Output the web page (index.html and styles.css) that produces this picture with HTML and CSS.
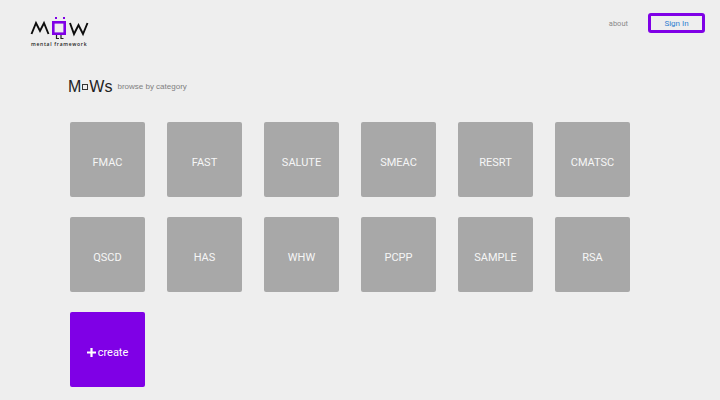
FILE: index.html
```html
<!DOCTYPE html>
<html lang="en">
<head>
<meta charset="utf-8">
<title>MOW mental framework</title>
<link rel="stylesheet" href="styles.css">
</head>
<body>
<header class="topbar">
  <a class="logo" href="#">
    <svg class="logo-mark" width="60" height="24" viewBox="0 0 60 24" aria-hidden="true">
      <path class="ink" d="M1.5 18 L6 7 L10 15 L14 7 L18.5 18"/>
      <path class="ink" d="M40 7 L44 18 L48.5 9 L53 18 L57.5 7"/>
      <rect class="frame" x="23.3" y="6.3" width="11.4" height="11.4"/>
      <rect class="dot" x="25" y="1" width="2" height="2"/>
      <rect class="dot" x="33" y="1" width="2" height="2"/>
      <path class="feet" d="M26.5 19 V22.5 H29 M31 19 V22.5 H33.5"/>
    </svg>
    <span class="tagline">mental framework</span>
  </a>
  <nav class="nav">
    <a class="about" href="#">about</a>
    <a class="signin" href="#">Sign In</a>
  </nav>
</header>
<main class="content">
  <div class="heading">
    <h1 class="title">M<span class="square"></span>Ws</h1>
    <span class="subtitle">browse by category</span>
  </div>
  <div class="grid">
    <a class="tile" href="#">FMAC</a>
    <a class="tile" href="#">FAST</a>
    <a class="tile" href="#">SALUTE</a>
    <a class="tile" href="#">SMEAC</a>
    <a class="tile" href="#">RESRT</a>
    <a class="tile" href="#">CMATSC</a>
    <a class="tile" href="#">QSCD</a>
    <a class="tile" href="#">HAS</a>
    <a class="tile" href="#">WHW</a>
    <a class="tile" href="#">PCPP</a>
    <a class="tile" href="#">SAMPLE</a>
    <a class="tile" href="#">RSA</a>
    <a class="tile create" href="#"><svg class="plus" width="9" height="9" viewBox="0 0 9 9" aria-hidden="true"><path d="M3.4 0h2.2v3.4H9v2.2H5.6V9H3.4V5.6H0V3.4h3.4z"/></svg>create</a>
  </div>
</main>
</body>
</html>
```
FILE: styles.css
```css
* { box-sizing: border-box; }
html, body { margin: 0; height: 400px; overflow: hidden; }
body { background: #eeeeee; font-family: Roboto, "Liberation Sans", sans-serif; }
a { text-decoration: none; }

.topbar { display: flex; justify-content: space-between; align-items: flex-start; height: 70px; padding: 13px 15px 0 30px; }
.logo { display: flex; flex-direction: column; width: 62px; color: #222; }
.logo-mark { display: block; margin-top: 3px; }
.ink { fill: none; stroke: #0c0c0c; stroke-width: 1.9; }
.frame { fill: none; stroke: #7f00e6; stroke-width: 2.6; }
.dot { fill: #7f00e6; }
.feet { fill: none; stroke: #222; stroke-width: 1.2; }
.tagline { font: 600 5px/6px "Open Sans", sans-serif; letter-spacing: 0.7px; white-space: nowrap; margin: 1px 0 0 1px; }

.nav { display: flex; align-items: center; gap: 20px; }
.about { font-size: 7.5px; color: #8a8a8a; }
.signin { display: flex; align-items: center; justify-content: center; width: 57px; height: 20px; border: 3px solid #7f00e6; border-radius: 3px; font-size: 8px; color: #2f7fd0; }

.content { padding: 0 0 0 68px; }
.heading { display: flex; align-items: center; gap: 5px; height: 52px; padding-bottom: 18px; }
.title { margin: 0; font: 400 16px/24px "Liberation Sans", sans-serif; color: #222; display: flex; align-items: center; }
.square { display: inline-block; width: 6px; height: 6px; margin: 0 1px; border: 1px solid #333; }
.subtitle { font: 400 8px/12px "Liberation Sans", sans-serif; color: #808080; }

.grid { display: grid; grid-template-columns: repeat(6, 75px); grid-auto-rows: 75px; gap: 20px 22px; padding-left: 2px; }
.tile { display: flex; align-items: center; justify-content: center; padding-top: 6px; background: #a8a8a8; border-radius: 2px; color: #f6f6f6; font-size: 11px; }
.create { background: #7f00e6; color: #fff; gap: 2px; }
.plus { fill: #fff; }
```
